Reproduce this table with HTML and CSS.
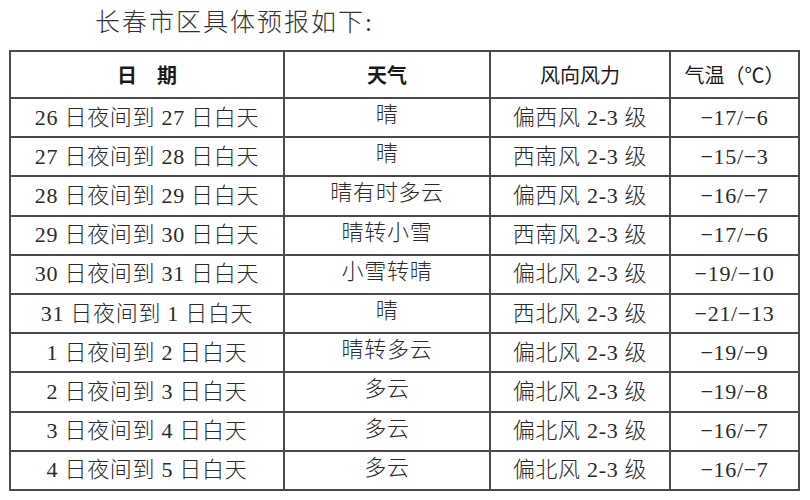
FILE: index.html
```html
<!DOCTYPE html>
<html lang="zh-CN">
<head>
<meta charset="utf-8">
<link rel="stylesheet" href="styles.css">
</head>
<body>
<div class="page">
  <div class="title">长春市区具体预报如下:</div>
  <table class="forecast">
    <colgroup>
      <col class="c1"><col class="c2"><col class="c3"><col class="c4">
    </colgroup>
    <thead>
      <tr><th class="bold">日　期</th><th class="bold">天气</th><th>风向风力</th><th>气温（℃）</th></tr>
    </thead>
    <tbody>
      <tr><td>26 日夜间到 27 日白天</td><td class="wx">晴</td><td>偏西风 2-3 级</td><td>−17/−6</td></tr>
      <tr><td>27 日夜间到 28 日白天</td><td class="wx">晴</td><td>西南风 2-3 级</td><td>−15/−3</td></tr>
      <tr><td>28 日夜间到 29 日白天</td><td class="wx">晴有时多云</td><td>偏西风 2-3 级</td><td>−16/−7</td></tr>
      <tr><td>29 日夜间到 30 日白天</td><td class="wx">晴转小雪</td><td>西南风 2-3 级</td><td>−17/−6</td></tr>
      <tr><td>30 日夜间到 31 日白天</td><td class="wx">小雪转晴</td><td>偏北风 2-3 级</td><td>−19/−10</td></tr>
      <tr><td>31 日夜间到 1 日白天</td><td class="wx">晴</td><td>西北风 2-3 级</td><td>−21/−13</td></tr>
      <tr><td>1 日夜间到 2 日白天</td><td class="wx">晴转多云</td><td>偏北风 2-3 级</td><td>−19/−9</td></tr>
      <tr><td>2 日夜间到 3 日白天</td><td class="wx">多云</td><td>偏北风 2-3 级</td><td>−19/−8</td></tr>
      <tr><td>3 日夜间到 4 日白天</td><td class="wx">多云</td><td>偏北风 2-3 级</td><td>−16/−7</td></tr>
      <tr><td>4 日夜间到 5 日白天</td><td class="wx">多云</td><td>偏北风 2-3 级</td><td>−16/−7</td></tr>
    </tbody>
  </table>
</div>
</body>
</html>
```
FILE: styles.css
```css
html, body {
  margin: 0;
  padding: 0;
  background: #ffffff;
}
body {
  font-family: "Liberation Serif", "Noto Sans CJK SC", serif;
  color: #2a2a2a;
}
.page {
  width: 810px;
  height: 500px;
  overflow: hidden;
  padding: 6px 0 0 9px;
  box-sizing: border-box;
}
.title {
  font-size: 25px;
  font-weight: 300;
  letter-spacing: 2px;
  line-height: 34px;
  height: 44px;
  padding-left: 86px;
  color: #333333;
}
.forecast {
  border-collapse: collapse;
  table-layout: fixed;
  width: 789px;
  border: 2px solid #4a4a4a;
}
.c1 { width: 274px; }
.c2 { width: 206px; }
.c3 { width: 180px; }
.c4 { width: 129px; }
.forecast th,
.forecast td {
  border: 2px solid #4a4a4a;
  text-align: center;
  padding: 0;
  font-size: 22px;
  font-weight: 300;
  white-space: nowrap;
}
.forecast th {
  height: 45px;
  font-size: 20px;
  font-weight: 400;
  color: #1a1a1a;
}
.forecast th.bold {
  font-weight: 700;
}
.forecast td {
  height: 36.2px;
  line-height: 30px;
  letter-spacing: 0.7px;
}
.forecast td.wx {
  vertical-align: top;
  padding-top: 1px;
}
```
